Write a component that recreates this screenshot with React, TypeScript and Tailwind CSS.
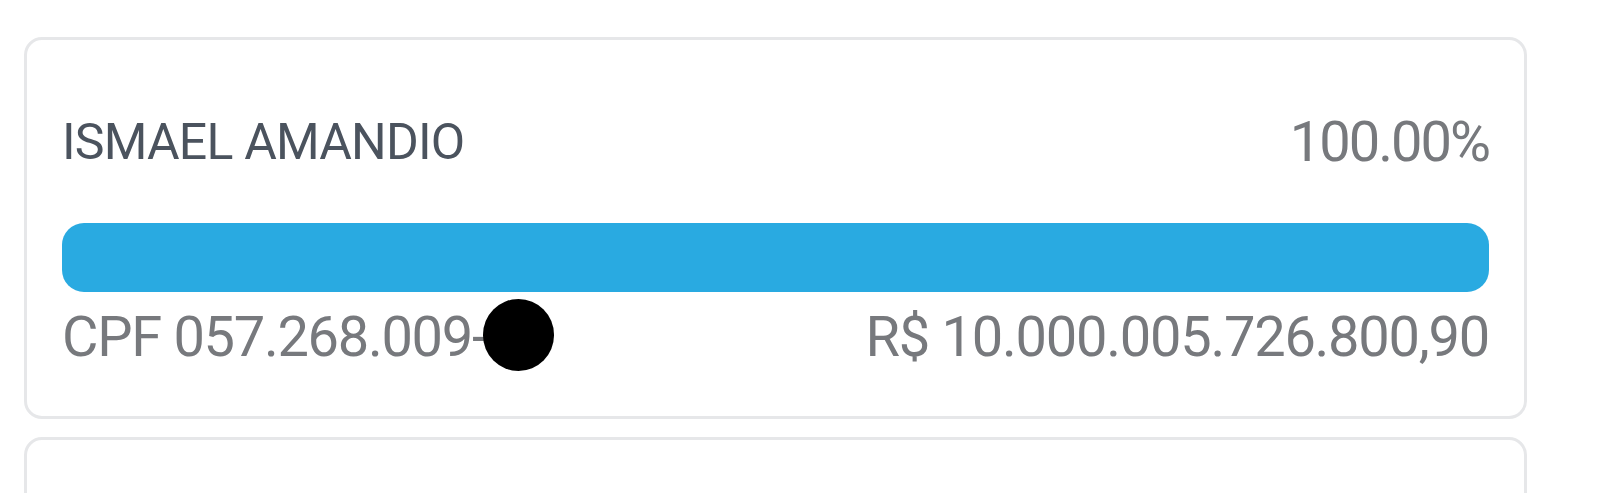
import React from 'react';

type Holder = {
  name: string;
  share: string;
  cpf: string;
  amount: string;
};

const holders: Holder[] = [
  {
    name: 'ISMAEL AMANDIO',
    share: '100.00%',
    cpf: 'CPF 057.268.009-',
    amount: 'R$ 10.000.005.726.800,90',
  },
];

const HolderCard = ({ holder }: { holder: Holder }) => (
  <div className="w-[1503px] rounded-[18px] border-[3px] border-[#e6e7e9] bg-white px-[35px] pt-[70px] pb-[45px]">
    <div className="flex items-center justify-between">
      <span className="text-[50px] leading-[58px] tracking-[-0.8px] text-[#4b535e]">{holder.name}</span>
      <span className="text-[56px] leading-[64px] tracking-[-2px] text-[#77797d]">{holder.share}</span>
    </div>

    <div className="mt-[49px] h-[69px] w-full rounded-[22px] bg-[#29aae1]" />

    <div className="mt-[11px] flex items-center justify-between">
      <div className="flex items-center">
        <span className="text-[56px] leading-[64px] tracking-[-1.3px] text-[#77797d]">{holder.cpf}</span>
        {/* masked digits */}
        <span className="-mt-[4px] -ml-[3px] block h-[72px] w-[71px] rounded-full bg-black blur-[0.6px]" />
      </div>
      <span className="text-[56px] leading-[64px] tracking-[-1.25px] text-[#77797d]">{holder.amount}</span>
    </div>
  </div>
);

export default function App() {
  return (
    <div className="h-[493px] overflow-hidden bg-white font-['Roboto',_'Liberation_Sans',_sans-serif]">
      <div className="flex flex-col gap-[18px] pl-[24px] pt-[37px]">
        {holders.map((h) => (
          <HolderCard key={h.cpf} holder={h} />
        ))}
        <div className="h-[300px] w-[1503px] rounded-[18px] border-[3px] border-[#e6e7e9] bg-white" />
      </div>
    </div>
  );
}
